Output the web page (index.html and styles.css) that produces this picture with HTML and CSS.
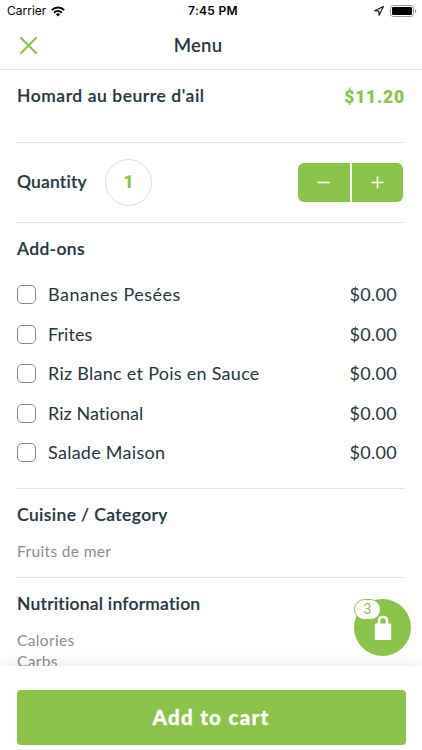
FILE: index.html
```html
<!DOCTYPE html>
<html lang="en">
<head>
<meta charset="utf-8">
<meta name="viewport" content="width=device-width, initial-scale=1">
<title>Menu</title>
<link rel="stylesheet" href="styles.css">
</head>
<body>
<div class="screen">
  <div class="status">
    <div class="status-left"><span class="carrier">Carrier</span>
      <svg class="wifi" width="14" height="11" viewBox="0 0 14 11"><g fill="none" stroke="#000" stroke-width="2"><path d="M.8 4.1a8.8 8.8 0 0 1 12.4 0"/><path d="M3.1 6.7a5.5 5.5 0 0 1 7.8 0"/></g><path d="M4.8 8.3a3.1 3.1 0 0 1 4.4 0L7 10.6z"/></svg>
    </div>
    <span class="clock">7:45 PM</span>
    <div class="status-right">
      <svg width="10" height="10" viewBox="0 0 10 10"><path d="M9.4.6.7 4.7l4.1.4.3 4.2z" fill="none" stroke="#111" stroke-width="1.1" stroke-linejoin="round"/></svg>
      <svg width="27" height="12" viewBox="0 0 27 12"><rect x=".5" y=".5" width="23" height="11" rx="2.8" fill="none" stroke="#999"/><rect x="2" y="2" width="20" height="8" rx="1.2"/><path d="M25 4v4q1.4-.6 1.4-2T25 4z" fill="#999"/></svg>
    </div>
  </div>
  <header class="nav">
    <svg class="close" width="17" height="17" viewBox="0 0 17 17"><path d="M1 1l15 15M16 1 1 16" stroke="#8bc34a" stroke-width="2" stroke-linecap="round"/></svg>
    <h1>Menu</h1>
  </header>
  <main class="content">
    <section class="item"><h2 class="name">Homard au beurre d'ail</h2><span class="price">$11.20</span></section>
    <section class="quantity">
      <h2 class="qty-label">Quantity</h2><span class="count">1</span>
      <div class="stepper">
        <button class="step" aria-label="Decrease"><svg width="13" height="13" viewBox="0 0 13 13"><path d="M.5 6.5h12" stroke="#fff" stroke-width="1.6"/></svg></button>
        <button class="step" aria-label="Increase"><svg width="13" height="13" viewBox="0 0 13 13"><path d="M.5 6.5h12M6.5.5v12" stroke="#fff" stroke-width="1.6"/></svg></button>
      </div>
    </section>
    <section class="addons">
      <h2 class="addons-title">Add-ons</h2>
      <ul>
        <li><i class="box"></i><span class="wide">Bananes Pesées</span><span class="cost">$0.00</span></li>
        <li><i class="box"></i><span class="tight">Frites</span><span class="cost">$0.00</span></li>
        <li><i class="box"></i><span class="option">Riz Blanc et Pois en Sauce</span><span class="cost">$0.00</span></li>
        <li><i class="box"></i><span class="tight">Riz National</span><span class="cost">$0.00</span></li>
        <li><i class="box"></i><span class="option">Salade Maison</span><span class="cost">$0.00</span></li>
      </ul>
    </section>
    <section class="category"><h2 class="category-title">Cuisine / Category</h2><p>Fruits de mer</p></section>
    <section class="nutrition"><h2 class="nutrition-title">Nutritional information</h2><p>Calories</p><p>Carbs</p></section>
  </main>
  <div class="cart">
    <svg width="18" height="26" viewBox="0 0 18 26"><path d="M5 10V6q0-4 4-4t4 4v4" fill="none" stroke="#fff" stroke-width="2.6"/><rect x=".8" y="8.5" width="16.4" height="16.5" rx="1" fill="#fff"/></svg>
    <span class="badge">3</span>
  </div>
  <footer class="footer"><button class="add">Add to cart</button></footer>
</div>
</body>
</html>
```
FILE: styles.css
```css
* { box-sizing: border-box; }
body { margin: 0; background: #fff; color: #263640; font-family: Lato, "Open Sans", sans-serif; font-variant-ligatures: none; }
h1, h2, p, ul { margin: 0; padding: 0; }
button { border: 0; padding: 0; font: inherit; color: #fff; background: #8bc34a; }
svg { display: block; flex: none; }
span, h1, h2, p { white-space: nowrap; }
.screen { position: relative; width: 422px; height: 750px; overflow: hidden; display: flex; flex-direction: column; }
.status { height: 22px; flex: none; display: grid; grid-template-columns: 1fr auto 1fr; align-items: center; padding: 0 5px 0 7px; color: #000; font: 12px/22px Inter, sans-serif; }
.status-left { display: flex; align-items: center; gap: 5px; }
.clock { font-weight: 600; letter-spacing: .3px; padding-left: 2px; }
.status-right { display: flex; align-items: center; justify-content: flex-end; gap: 6px; }
.nav { height: 48px; flex: none; border-bottom: 1px solid #dedede; display: grid; grid-template-columns: 1fr auto 1fr; align-items: center; padding: 0 46px 0 20px; }
.nav h1 { font-size: 18.5px; line-height: 44px; font-weight: 600; letter-spacing: .2px; padding-bottom: 2px; }
.content { flex: 1; min-height: 0; overflow: hidden; padding: 0 17px; }
.content section { border-bottom: 1px solid #e2e3e4; }
.content h2 { font-size: 17.5px; line-height: 24px; font-weight: 600; -webkit-text-stroke: .15px #263640; }
.content .name { letter-spacing: .54px; }
.addons-title { letter-spacing: .35px; }
.category-title { letter-spacing: .38px; }
.nutrition-title { letter-spacing: .22px; }
.item { height: 73px; display: flex; justify-content: space-between; padding-top: 14px; }
.price { font: 900 17.5px/27px Roboto, sans-serif; color: #8bc34a; letter-spacing: .8px; }
.quantity { height: 80px; display: flex; align-items: center; }
.qty-label { width: 70px; padding-bottom: 1px; letter-spacing: .15px; }
.count { width: 47px; height: 47px; margin-left: 18px; border: 1px solid #ddd; border-radius: 50%; text-align: center; font: 900 17.5px/44px Roboto, sans-serif; color: #8bc34a; }
.stepper { margin-left: auto; margin-right: 2px; display: flex; gap: 2px; }
.step { width: 51.5px; height: 39px; display: grid; place-items: center; border-radius: 6px 0 0 6px; }
.step + .step { border-radius: 0 6px 6px 0; }
.addons { height: 266px; padding-top: 14px; }
.addons ul { list-style: none; margin-top: 14px; }
.addons li { height: 39.5px; display: flex; align-items: center; font-size: 18px; padding-right: 8px; }
.addons li span { padding-bottom: 1px; }
.box { width: 19px; height: 19px; border: 1px solid #85858f; border-radius: 5px; margin-right: 12px; }
.wide { letter-spacing: .5px; }
.option { letter-spacing: .27px; }
.tight { letter-spacing: .05px; }
.cost { margin-left: auto; letter-spacing: .3px; }
.category { height: 89px; padding-top: 14px; }
.content p { color: #8b8d91; font-size: 15.5px; line-height: 21px; letter-spacing: .35px; }
.category p, .nutrition h2 + p { margin-top: 14px; }
.nutrition p + p { line-height: 20px; }
.content .nutrition { padding-top: 14px; border: 0; }
.cart { position: absolute; z-index: 1; left: 354px; top: 599px; width: 57px; height: 57px; border-radius: 50%; background: #8bc34a; display: grid; place-items: center; }
.badge { position: absolute; left: 0; top: 0; width: 27px; height: 21px; border: 1px solid #8bc34a; border-radius: 11px; background: #fff; color: #8bc34a; font: 14px/19px Roboto, sans-serif; text-align: center; }
.footer { position: relative; height: 84px; flex: none; background: #fff; box-shadow: 0 0 16px rgba(0, 0, 0, .11); padding: 24px 16.5px 0; }
.add { width: 389px; height: 55px; border-radius: 4px; font-size: 20.5px; font-weight: 900; letter-spacing: 1.3px; padding-bottom: 1px; -webkit-text-stroke: .3px #fff; }
```
